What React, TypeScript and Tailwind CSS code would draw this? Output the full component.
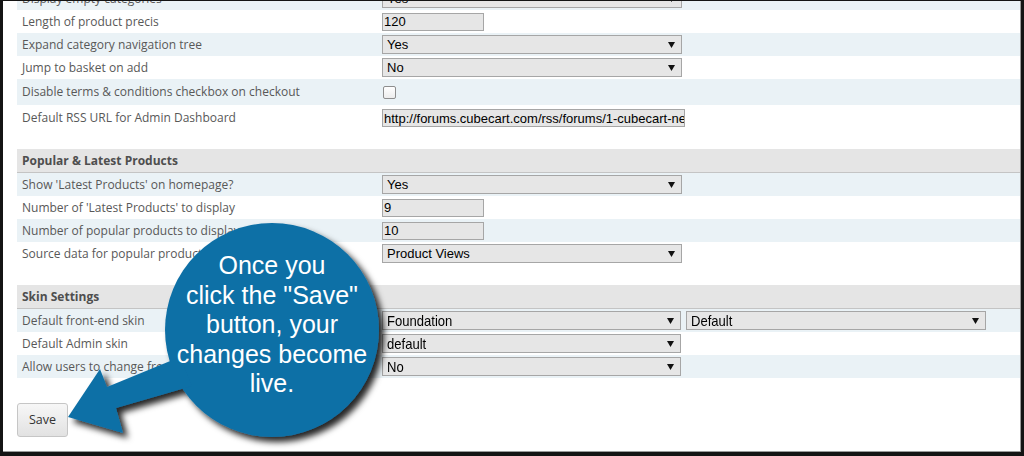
import type { ReactNode } from 'react';

const label = "font-['Open_Sans',sans-serif] text-[12px] text-[#585858]";
const field = "font-['Liberation_Sans',Arial,sans-serif] text-[13px] text-black";

const Caret = () => (
  <svg width="7" height="6" viewBox="0 0 7 6" className="shrink-0">
    <path d="M0 0 H7 L3.5 6 Z" fill="#111" />
  </svg>
);

const Select = ({ value, narrow = false, w = 'w-[300px]' }: { value: string; narrow?: boolean; w?: string }) => (
  <div
    className={`flex h-[19px] ${w} items-center justify-between overflow-hidden border border-[#a6a6a6] bg-[#e6e6e6] pl-[4px] pr-[6px] ${field}`}
  >
    {narrow ? (
      <span className="inline-block origin-left scale-x-[0.87] text-[15px] leading-none">{value}</span>
    ) : (
      <span className="leading-none">{value}</span>
    )}
    <Caret />
  </div>
);

const TextInput = ({ value, w = 'w-[102px]' }: { value: string; w?: string }) => (
  <div className={`flex h-[18px] ${w} items-center overflow-hidden whitespace-nowrap border border-[#a6a6a6] bg-[#e6e6e6] pl-[1px] ${field}`}>
    <span className="leading-none">{value}</span>
  </div>
);

const Checkbox = () => (
  <div className="ml-[1px] h-[13px] w-[13px] rounded-[2px] border border-[#8e8e8e] bg-gradient-to-b from-white to-[#ededed]" />
);

const Row = ({ text, striped, h = 'h-[23px]', children }: { text: string; striped?: boolean; h?: string; children: ReactNode }) => (
  <div className={`flex ${h} items-center ${striped ? 'bg-[#eaf2f6]' : ''}`}>
    <div className={`w-[365px] shrink-0 whitespace-nowrap pl-[5px] ${label}`}>{text}</div>
    <div className="flex items-center gap-[5px]">{children}</div>
  </div>
);

const Header = ({ text }: { text: string }) => (
  <div className="flex h-[24px] items-center border-b border-[#c4c4c4] bg-[#e5e5e5] pl-[5px]">
    <span className="font-['Open_Sans',sans-serif] text-[12px] font-bold text-[#4e4e4e]">{text}</span>
  </div>
);

const Callout = () => (
  <div className="pointer-events-none absolute inset-0">
    <svg width="1024" height="456" className="absolute left-0 top-0">
      <defs>
        <filter id="shade" x="-20%" y="-20%" width="140%" height="140%">
          <feDropShadow dx="5" dy="5" stdDeviation="3" floodColor="#000" floodOpacity="0.85" />
        </filter>
      </defs>
      <g filter="url(#shade)" fill="#0d6fa6">
        <circle cx="272" cy="330" r="107" />
        <path d="M68 417 L100 369 L107 387 L180 357 L192 386 L116 408 L123 433 Z" />
      </g>
    </svg>
    <div className="absolute left-[160px] top-[251px] w-[224px] text-center font-['Liberation_Sans',Arial,sans-serif] text-[25px] leading-[29.5px] text-white">
      Once you
      <br />
      click the "Save"
      <br />
      button, your
      <br />
      changes become
      <br />
      live.
    </div>
  </div>
);

export default function App() {
  return (
    <div className="relative h-[456px] w-[1024px] overflow-hidden bg-[#141414] pb-[4px] pl-[3px] pr-[3px] pt-[1px]">
      <div className="h-full w-full overflow-hidden border-b border-r border-[#9a9a9a] bg-white pl-[14px]">
        <div className="-mt-[14px]">
          <Row text="Display empty categories" striped>
            <Select value="Yes" />
          </Row>
          <Row text="Length of product precis">
            <TextInput value="120" />
          </Row>
          <Row text="Expand category navigation tree" striped>
            <Select value="Yes" />
          </Row>
          <Row text="Jump to basket on add">
            <Select value="No" />
          </Row>
          <Row text="Disable terms & conditions checkbox on checkout" striped h="h-[26px]">
            <Checkbox />
          </Row>
          <Row text="Default RSS URL for Admin Dashboard" h="h-[26px]">
            <TextInput value="http://forums.cubecart.com/rss/forums/1-cubecart-news-announcements/" w="w-[303px]" />
          </Row>
        </div>

        <div className="mt-[18px]">
          <Header text="Popular & Latest Products" />
          <Row text="Show 'Latest Products' on homepage?" striped>
            <Select value="Yes" />
          </Row>
          <Row text="Number of 'Latest Products' to display">
            <TextInput value="9" />
          </Row>
          <Row text="Number of popular products to display" striped>
            <TextInput value="10" />
          </Row>
          <Row text="Source data for popular products">
            <Select value="Product Views" />
          </Row>
        </div>

        <div className="mt-[20px]">
          <Header text="Skin Settings" />
          <Row text="Default front-end skin" striped>
            <Select value="Foundation" narrow w="w-[299px]" />
            <Select value="Default" narrow />
          </Row>
          <Row text="Default Admin skin">
            <Select value="default" narrow w="w-[299px]" />
          </Row>
          <Row text="Allow users to change front-end skin" striped>
            <Select value="No" narrow w="w-[299px]" />
          </Row>
        </div>

        <button className="mt-[25px] flex h-[34px] w-[51px] items-center justify-center rounded-[3px] border border-[#c6c6c6] bg-gradient-to-b from-[#f7f7f7] to-[#e2e2e2] font-['Open_Sans',sans-serif] text-[12.5px] text-[#333]">
          Save
        </button>
      </div>
      <Callout />
    </div>
  );
}
